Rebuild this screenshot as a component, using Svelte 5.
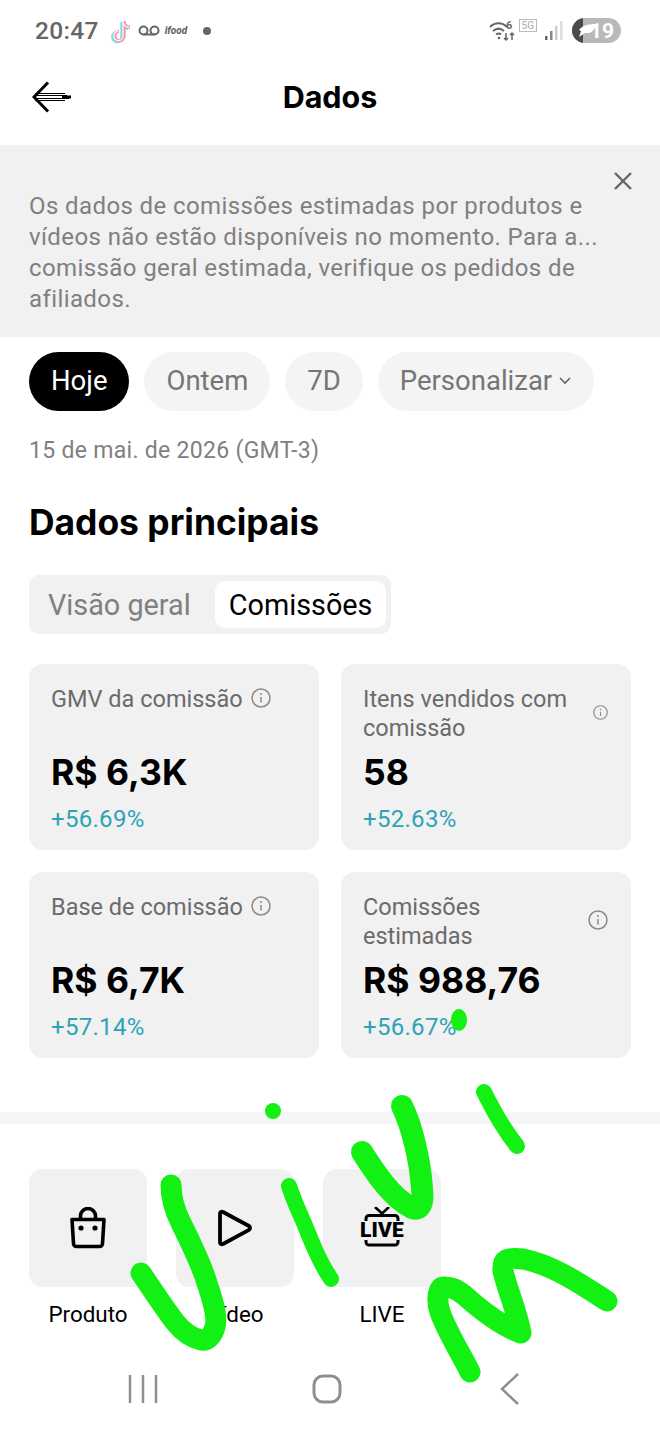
<script>
	const chips = ['Ontem', '7D'];
	const cards = [
		{ title: 'GMV da comissão', value: 'R$ 6,3K', delta: '+56.69%', icon: 20, inline: true },
		{ title: 'Itens vendidos com comissão', value: '58', delta: '+52.63%', icon: 15 },
		{ title: 'Base de comissão', value: 'R$ 6,7K', delta: '+57.14%', icon: 20, inline: true },
		{ title: 'Comissões estimadas', value: 'R$ 988,76', delta: '+56.67%', icon: 20, narrow: true }
	];
</script>

<div class="screen">
	<div class="status">
		<span class="time">20:47</span>
		<svg class="tiktok" width="24" height="26" viewBox="0 0 24 26" fill="none" stroke-width="3.4">
			<path d="M14 3v15a4.6 4.6 0 1 1-5-4.6M14 4c.5 3 3 5 6 5.200" stroke="#7fdce4" transform="translate(-1 1)" />
			<path d="M14 3v15a4.6 4.6 0 1 1-5-4.600M14 4c.5 3 3 5 6 5.200" stroke="#f29bb0" transform="translate(1 0)" />
			<path d="M14 3v15a4.6 4.6 0 1 1-5-4.600M14 4c.5 3 3 5 6 5.200" stroke="#fff" stroke-width="1.200" />
		</svg>
		<svg class="voicemail" width="22" height="12" viewBox="0 0 22 12" fill="none" stroke="#666" stroke-width="2">
			<circle cx="5.500" cy="5.500" r="4" /><circle cx="16.500" cy="5.500" r="4" /><path d="M5.500 9.500h11" />
		</svg>
		<span class="ifood">ifood</span>
		<span class="dot"></span>
		<span class="grow"></span>
		<svg class="wifi" width="28" height="24" viewBox="0 0 28 24" fill="none" stroke="#666" stroke-width="2">
			<path d="M1 8c5-5 12-5 17 0M4 12c3.500-3 7.500-3 11 0M7 15.500c2-1.500 3.500-1.500 5 0" />
			<circle cx="10" cy="19" r="1.300" fill="#666" stroke="none" />
			<path d="M17 14v7m-2-2 2 2 2-2M23 21v-7m-2 2 2-2 2 2" stroke-width="1.500" />
			<text x="17" y="10" class="six">6</text>
		</svg>
		<span class="fiveg">5G</span>
		<svg class="signal" width="18" height="24" viewBox="0 0 18 24">
			<rect x="0" y="17" width="2.500" height="4" fill="#666" />
			<rect x="5" y="12" width="2.500" height="9" fill="#888" />
			<rect x="10" y="7" width="2.500" height="14" fill="#ccc" />
			<rect x="15" y="2" width="2.500" height="19" fill="#ddd" />
		</svg>
		<div class="battery">
			<span class="charge"></span>
			<svg class="leaf" width="20" height="15" viewBox="0 0 20 15"><path d="M2 7c3-4 8-6 17-6-1 5-3 8-7 9H8l-6 4 2-6z" fill="#fff" /></svg>
			<span class="level">19</span>
		</div>
	</div>

	<header class="top">
		<svg class="back" width="40" height="32" viewBox="0 0 40 32" fill="none" stroke="#000">
			<path d="M16 1.500 2 16l14 14.500" stroke-width="3" />
			<path d="M3 12.500h30M3 14.500h32M3 17.500h34M3 19.500h30" stroke-width="1" />
			<path d="M30 16h9" stroke-width="3" />
		</svg>
		<h1>Dados</h1>
	</header>

	<div class="banner">
		<p>Os dados de comissões estimadas por produtos e vídeos não estão disponíveis no momento. Para a... comissão geral estimada, verifique os pedidos de afiliados.</p>
		<svg class="close" width="20" height="20" viewBox="0 0 20 20" stroke="#666" stroke-width="2.400">
			<path d="M2 2l16 16M18 2 2 18" />
		</svg>
	</div>

	<div class="chips">
		<span class="chip on">Hoje</span>
		{#each chips as chip}
			<span class="chip">{chip}</span>
		{/each}
		<span class="chip">
			Personalizar
			<svg width="14" height="9" viewBox="0 0 14 9" fill="none" stroke="#666" stroke-width="1.600"><path d="m2 2 5 5 5-5" /></svg>
		</span>
	</div>

	<div class="date">15 de mai. de 2026 (GMT-3)</div>
	<h2>Dados principais</h2>

	<div class="tabs">
		<span class="tab">Visão geral</span>
		<span class="tab on">Comissões</span>
	</div>

	<div class="cards">
		{#each cards as card}
			<div class="card">
				<div class="head" class:spread={!card.inline}>
					<span class="title" class:narrow={card.narrow}>{card.title}</span>
					<svg class="info" width={card.icon} height={card.icon} viewBox="0 0 20 20" fill="none" stroke="#8a8a8a" stroke-width="1.500">
						<circle cx="10" cy="10" r="9" />
						<path d="M10 9v5.500" />
						<circle cx="10" cy="6" r="1" fill="#8a8a8a" stroke="none" />
					</svg>
				</div>
				<div class="value">{card.value}</div>
				<div class="delta">{card.delta}</div>
			</div>
		{/each}
	</div>

	<div class="divider"></div>

	<div class="tools">
		<div class="tool">
			<div class="tile">
				<svg width="38" height="42" viewBox="0 0 38 42" fill="none" stroke="#000" stroke-width="3.600">
					<path d="M11.500 12V9a7.500 7.500 0 0 1 15 0v3" />
					<path d="M3 12.500h32l-1.500 24a3 3 0 0 1-3 3H7.500a3 3 0 0 1-3-3z" stroke-linejoin="round" />
					<circle cx="12" cy="21" r="2.600" fill="#000" stroke="none" />
					<circle cx="26" cy="21" r="2.600" fill="#000" stroke="none" />
				</svg>
			</div>
			<span>Produto</span>
		</div>
		<div class="tool">
			<div class="tile">
				<svg width="36" height="38" viewBox="0 0 36 38" fill="none" stroke="#000" stroke-width="3.800" stroke-linejoin="round">
					<path d="M3 4.500c0-1.500 1.500-2.500 3-1.500l26 14c1.400.8 1.400 3 0 3.800L6 35c-1.500 1-3 0-3-1.500z" />
				</svg>
			</div>
			<span>Vídeo</span>
		</div>
		<div class="tool">
			<div class="tile">
				<div class="live">
					<svg width="40" height="14" viewBox="0 0 40 14" fill="none" stroke="#000" stroke-width="3">
						<path d="M13 0l7 6.500L27 0" stroke-width="2.600" />
						<path d="M4 14v-2.500a3 3 0 0 1 3-3h26a3 3 0 0 1 3 3V14" />
					</svg>
					<b>LIVE</b>
					<svg width="40" height="7" viewBox="0 0 40 7" fill="none" stroke="#000" stroke-width="3">
						<path d="M4 0v2a3 3 0 0 0 3 3h26a3 3 0 0 0 3-3V0" />
					</svg>
				</div>
			</div>
			<span>LIVE</span>
		</div>
	</div>

	<div class="nav">
		<svg width="30" height="30" viewBox="0 0 30 30" stroke="#8f8f8f" stroke-width="2.500"><path d="M2 1v28M15 1v28M28 1v28" /></svg>
		<svg width="30" height="30" viewBox="0 0 30 30" fill="none" stroke="#8f8f8f" stroke-width="3"><rect x="2" y="2" width="26" height="26" rx="9" /></svg>
		<svg class="nav-back" width="22" height="32" viewBox="0 0 22 32" fill="none" stroke="#8f8f8f" stroke-width="2.500"><path d="M19 1 3 16l16 15" /></svg>
	</div>

	<!-- marker scribble drawn over the screenshot -->
	<svg class="scribble" width="660" height="1431" viewBox="0 0 660 1431" fill="none" stroke="#13f013" stroke-linecap="round" stroke-linejoin="round">
		<path d="M171 1185c0 14 4 26 10 38 10 20 20 40 26 60 6 18 11 34 8 44-3 10-8 14-14 13-9-2-18-8-26-18-10-13-24-34-34-49" stroke-width="21" />
		<path d="M289 1186c4 12 10 26 15 37 8 20 16 40 27 56" stroke-width="16" />
		<path d="M362 1152c14 22 30 46 50 56 8 3 12-4 10-20-2-28-10-62-20-82" stroke-width="22" />
		<path d="M484 1092c10 20 20 38 33 54" stroke-width="16" />
		<path d="M470 1372c-10-20-24-42-30-60-4-12-2-26 4-25 8 0 12 2 20 8 20 18 40 32 57 38-4-22-14-44-18-62-1-12 4-14 20-12 30 6 56 24 84 42" stroke-width="21" />
		<circle cx="273" cy="1111" r="8" fill="#13f013" stroke="none" />
		<ellipse cx="459" cy="1020" rx="8" ry="11" fill="#13f013" stroke="none" />
	</svg>
</div>

<style>
	:global(body) {
		background: #fff;
	}
	.screen {
		position: relative;
		width: 660px;
		height: 1431px;
		overflow: hidden;
		font-family: Roboto, "Noto Sans", sans-serif;
		color: #000;
		background: #fff;
	}
	.status {
		display: flex;
		align-items: center;
		height: 61px;
		padding: 0 39px 0 35px;
		box-sizing: border-box;
		color: #666;
	}
	.time {
		font-size: 24.500px;
		font-weight: 500;
		letter-spacing: 0.3px;
	}
	.tiktok {
		margin-left: 10px;
	}
	.voicemail {
		margin-left: 5px;
	}
	.ifood {
		margin-left: 5px;
		font-size: 10px;
		font-weight: 800;
		font-style: italic;
	}
	.dot {
		width: 8px;
		height: 8px;
		margin-left: 16px;
		border-radius: 50%;
		background: #666;
	}
	.grow {
		flex: 1;
	}
	.six {
		font-size: 11px;
		font-weight: 700;
		fill: #666;
		stroke: none;
		font-family: Roboto, sans-serif;
	}
	.fiveg {
		margin: 0 0 10px 2px;
		padding: 0 2px;
		border: 1px solid #bbb;
		font-size: 10px;
		line-height: 11px;
		color: #aaa;
	}
	.signal {
		margin-left: 8px;
	}
	.battery {
		position: relative;
		display: flex;
		align-items: center;
		width: 49px;
		height: 25px;
		margin-left: 9px;
		border-radius: 13px;
		overflow: hidden;
		background: #b9b9b9;
	}
	.charge {
		width: 11px;
		height: 25px;
		background: #4b4b4b;
	}
	.leaf {
		position: absolute;
		left: 5px;
		top: 5px;
	}
	.level {
		margin-left: 7px;
		font-size: 21px;
		font-weight: 700;
		color: #fff;
	}
	.top {
		position: relative;
		display: flex;
		align-items: center;
		justify-content: center;
		height: 84px;
	}
	.back {
		position: absolute;
		left: 32px;
		top: 20px;
	}
	h1 {
		margin: 0 0 14px;
		font-family: Inter, Roboto, sans-serif;
		font-size: 30.500px;
		font-weight: 700;
	}
	.banner {
		position: relative;
		height: 192px;
		padding: 46px 29px 0;
		box-sizing: border-box;
		background: #f1f1f1;
		color: #808080;
	}
	.banner p {
		margin: 0;
		width: 590px;
		font-size: 24px;
		line-height: 31px;
		letter-spacing: 0.4px;
	}
	.close {
		position: absolute;
		right: 27px;
		top: 26px;
	}
	.chips {
		display: flex;
		gap: 15px;
		margin: 15px 0 0 29px;
	}
	.chip {
		display: flex;
		align-items: center;
		gap: 6px;
		height: 59px;
		padding: 0 22px 2px;
		box-sizing: border-box;
		border-radius: 30px;
		background: #f4f4f4;
		color: #757575;
		font-size: 27.500px;
	}
	.chip.on {
		background: #000;
		color: #fff;
	}
	.date {
		margin: 25px 0 0 29px;
		font-size: 23px;
		line-height: 30px;
		letter-spacing: 0.3px;
		color: #808080;
	}
	h2 {
		margin: 35px 0 0 29px;
		font-family: Inter, Roboto, sans-serif;
		font-size: 35.400px;
		line-height: 44px;
		font-weight: 700;
	}
	.tabs {
		display: flex;
		width: fit-content;
		height: 59px;
		margin: 30px 0 0 29px;
		padding: 6px 5px 6px 0;
		box-sizing: border-box;
		border-radius: 10px;
		background: #f1f1f1;
		font-size: 28.800px;
	}
	.tab {
		display: flex;
		align-items: center;
		padding: 0 14px;
		color: #808080;
		border-radius: 10px;
	}
	.tab:first-child {
		padding: 0 24px 0 19px;
	}
	.tab.on {
		background: #fff;
		color: #000;
	}
	.cards {
		display: grid;
		grid-template-columns: 290px 290px;
		gap: 22px;
		margin: 30px 0 0 29px;
	}
	.card {
		height: 186px;
		padding: 21px 22px 0;
		box-sizing: border-box;
		border-radius: 14px;
		background: #f1f1f1;
	}
	.head {
		display: flex;
		align-items: flex-start;
		gap: 8px;
		height: 58px;
		color: #6b6b6b;
		font-size: 23.500px;
		line-height: 29px;
	}
	.head.spread {
		justify-content: space-between;
		align-items: center;
	}
	.head.spread .title {
		width: 215px;
	}
	.head .title.narrow {
		width: 150px;
	}
	.info {
		flex: none;
		margin: 3px 0 0;
	}
	.head.spread .info {
		margin: 0 0 4px;
		transform: translateX(-1px);
	}
	.value {
		margin-top: 8px;
		font-family: Inter, Roboto, sans-serif;
		font-size: 35.500px;
		line-height: 44px;
		font-weight: 700;
	}
	.delta {
		margin-top: 10px;
		font-size: 24px;
		line-height: 28px;
		letter-spacing: 0.3px;
		color: #2fa3b6;
	}
	.divider {
		height: 12px;
		margin-top: 54px;
		background: #f6f6f6;
	}
	.tools {
		display: flex;
		gap: 29px;
		margin: 45px 0 0 29px;
	}
	.tool {
		display: flex;
		flex-direction: column;
		align-items: center;
		gap: 15px;
		width: 118px;
		font-size: 22.400px;
		line-height: 25px;
	}
	.tile {
		display: flex;
		align-items: center;
		justify-content: center;
		width: 118px;
		height: 118px;
		border-radius: 14px;
		background: #f1f1f1;
	}
	.live {
		display: flex;
		flex-direction: column;
		align-items: center;
		margin-bottom: 2px;
	}
	.live b {
		font-size: 21px;
		line-height: 19px;
		font-weight: 900;
		letter-spacing: 0.2px;
	}
	.live svg {
		display: block;
	}
	.nav {
		position: absolute;
		left: 128px;
		top: 1373px;
		display: flex;
		align-items: center;
		gap: 154px;
	}
	.nav-back {
		margin-left: 3px;
	}
	.scribble {
		position: absolute;
		left: 0;
		top: 0;
		pointer-events: none;
	}
</style>
